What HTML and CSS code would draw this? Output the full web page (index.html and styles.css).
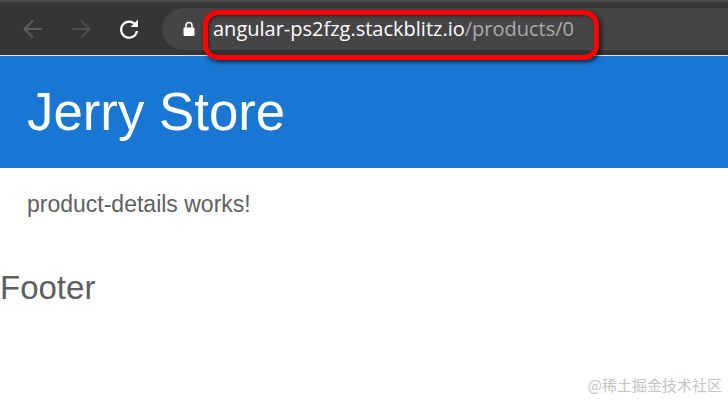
FILE: index.html
```html
<!DOCTYPE html>
<html lang="en">
<head>
<meta charset="utf-8">
<title>Jerry Store</title>
<link rel="stylesheet" href="styles.css">
</head>
<body>
<div class="toolbar">
  <svg class="nav-icon back" width="24" height="24" viewBox="0 0 24 24"><path d="M21 12H4M12 3.500 3.500 12l8.500 8.500" fill="none" stroke="#5a5c5e" stroke-width="2"/></svg>
  <svg class="nav-icon forward" width="24" height="24" viewBox="0 0 24 24"><path d="M3 12h17M12 3.500l8.500 8.500-8.500 8.500" fill="none" stroke="#4c4e50" stroke-width="2"/></svg>
  <svg class="nav-icon reload" width="24" height="24" viewBox="0 0 24 24"><path d="M18.600 8A8 8 0 1 0 20 14" fill="none" stroke="#fff" stroke-width="2.200"/><path d="M21 2.500V10h-7.500z" fill="#fff"/></svg>
  <div class="omnibox">
    <svg class="lock" width="14" height="16" viewBox="0 0 14 16"><path d="M4 7V4.500a3 3 0 0 1 6 0V7" fill="none" stroke="#fff" stroke-width="1.500"/><rect x="1.500" y="6.500" width="11" height="8.500" rx="1.200" fill="#fff"/></svg>
    <span class="url"><span class="host">angular-ps2fzg.stackblitz.io</span><span class="path">/products/0</span></span>
  </div>
</div>
<div class="annotation"></div>
<header class="banner"><h1 class="brand">Jerry Store</h1></header>
<p class="details">product-details works!</p>
<h2 class="footer">Footer</h2>
<div class="watermark">@稀土掘金技术社区</div>
</body>
</html>
```
FILE: styles.css
```css
html, body { margin: 0; padding: 0; }
body {
  position: relative;
  width: 728px;
  height: 400px;
  overflow: hidden;
  background: #fff;
  font-family: "Liberation Sans", Arial, sans-serif;
  color: #5f5f5f;
}
.toolbar {
  box-sizing: border-box;
  height: 56px;
  display: flex;
  align-items: center;
  background: #353535;
  border-top: 2px solid #4a4a4a;
  border-bottom: 1px solid #e4e4e4;
  padding-left: 21px;
}
.nav-icon { flex: none; }
.forward { margin-left: 24px; }
.reload { margin-left: 24px; }
.omnibox {
  box-sizing: border-box;
  flex: none;
  width: 580px;
  height: 42px;
  margin-left: 21px;
  display: flex;
  align-items: center;
  padding-left: 20px;
  background: #454545;
  border-radius: 21px 0 0 21px;
}
.lock { flex: none; }
.url {
  margin-left: 17px;
  font-family: "Open Sans", "Noto Sans", sans-serif;
  font-size: 20px;
  white-space: nowrap;
}
.host { color: #fff; }
.path { color: #a8abae; }
.annotation {
  position: absolute;
  left: 203px;
  top: 10px;
  width: 386px;
  height: 40px;
  border: 5px solid #f00;
  border-radius: 15px;
  box-shadow: 2px 2px 4px rgba(0, 0, 0, 0.7), inset 1px 1px 3px rgba(0, 0, 0, 0.5);
}
.banner {
  box-sizing: border-box;
  height: 112px;
  display: flex;
  align-items: center;
  padding: 0 0 2px 27px;
  background: #1976d2;
}
.brand {
  margin: 0;
  color: #fff;
  font-size: 52.800px;
  font-weight: 400;
}
.details {
  margin: 0;
  padding: 22px 0 0 27px;
  font-size: 23px;
  line-height: 28px;
}
.footer {
  margin: 0;
  padding-top: 51px;
  font-size: 33px;
  font-weight: 400;
  line-height: 38px;
}
.watermark {
  position: absolute;
  right: 6px;
  bottom: 5px;
  font-family: "Noto Sans CJK SC", sans-serif;
  font-size: 15px;
  color: #c4c4c4;
  white-space: nowrap;
}
```
